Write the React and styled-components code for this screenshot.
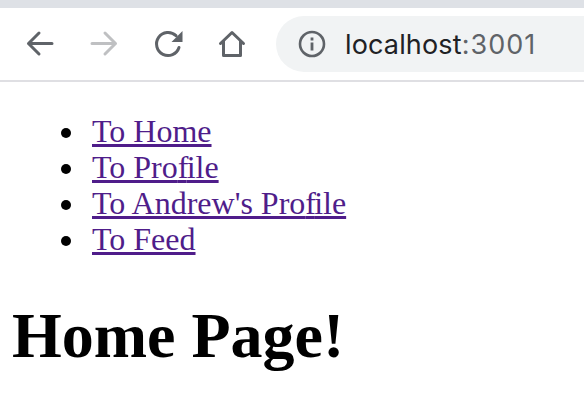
import React from 'react';
import styled, { createGlobalStyle } from 'styled-components';

const GlobalStyle = createGlobalStyle`
html, body {
  margin: 0;
  padding: 0;
  background: #fff;
}
`;

const TabStrip = styled.div`
height: 8px;
background-color: #dee1e6;
`;

const Toolbar = styled.div`
height: 72px;
display: flex;
align-items: center;
padding-left: 24px;
background: #fff;
border-bottom: 2px solid #dfdfe3;
overflow: hidden;
`;

const NavButton = styled.svg`
width: 32px;
height: 32px;
margin-right: ${({ $gap }) => $gap}px;
flex: none;
fill: none;
stroke: ${({ $disabled }) => ($disabled ? '#bfc0c2' : '#5f6368')};
stroke-width: 3;
stroke-linecap: round;
stroke-linejoin: round;
`;

const AddressBar = styled.div`
flex: none;
width: 340px;
height: 56px;
border-radius: 28px 0 0 28px;
background-color: #f1f3f4;
display: flex;
align-items: center;
padding-left: 22px;
`;

const InfoIcon = styled.svg`
width: 28px;
height: 28px;
flex: none;
margin-right: 19px;
`;

const Url = styled.div`
font-family: Inter, "Liberation Sans", sans-serif;
font-size: 27px;
letter-spacing: 0.15px;
color: #202124;
white-space: nowrap;
span {
  color: #5f6368;
  letter-spacing: 1px;
}
`;

const Content = styled.main`
font-family: "Liberation Serif", "Times New Roman", serif;
color: #000;
`;

const LinkList = styled.ul`
margin: 31px 0 0;
padding-left: 87px;
font-size: 32px;
line-height: 36px;
li {
  padding-left: 5px;
}
a {
  color: #4f1d8a;
  text-decoration: underline;
}
`;

// the reference joins "fi" into a ligature, this font doesn't
const TightF = styled.span`
letter-spacing: -1.8px;
`;

const Heading = styled.h1`
margin: 42px 0 0 12px;
font-size: 64px;
font-weight: bold;
`;

const App = () => {
  return (
    <>
      <GlobalStyle />
      <TabStrip />
      <Toolbar>
        <NavButton $gap={32} viewBox="0 0 32 32">
          <path d="M28 15.500H4.500M15 5 4.500 15.500 15 26" />
        </NavButton>
        <NavButton $gap={32} $disabled viewBox="0 0 32 32">
          <path d="M4 15.500h23.500M17 5l10.500 10.500L17 26" />
        </NavButton>
        <NavButton $gap={32} viewBox="0 0 32 32">
          <path d="M27 19.500A11.500 11.500 0 1 1 24 7.700" />
          <path d="M30.500 3V14H19.500Z" fill="#5f6368" stroke="none" />
        </NavButton>
        <NavButton $gap={28} viewBox="0 0 32 32">
          <path d="M4.500 15.500 16 4.500l11.500 11M7.500 13v14.500h17V13" />
        </NavButton>
        <AddressBar>
          <InfoIcon viewBox="0 0 28 28">
            <circle cx="14" cy="14" r="12" fill="none" stroke="#5f6368" strokeWidth="2.600" />
            <rect x="12.600" y="7.500" width="2.800" height="3" fill="#5f6368" />
            <rect x="12.600" y="12.500" width="2.800" height="8" fill="#5f6368" />
          </InfoIcon>
          <Url>localhost<span>:3001</span></Url>
        </AddressBar>
      </Toolbar>
      <Content>
        <LinkList>
          <li><a href="#top">To Home</a></li>
          <li><a href="#top">To Pro<TightF>f</TightF>ile</a></li>
          <li><a href="#top">To Andrew's Pro<TightF>f</TightF>ile</a></li>
          <li><a href="#top">To Feed</a></li>
        </LinkList>
        <Heading>Home Page!</Heading>
      </Content>
    </>
  );
};

export default App;
